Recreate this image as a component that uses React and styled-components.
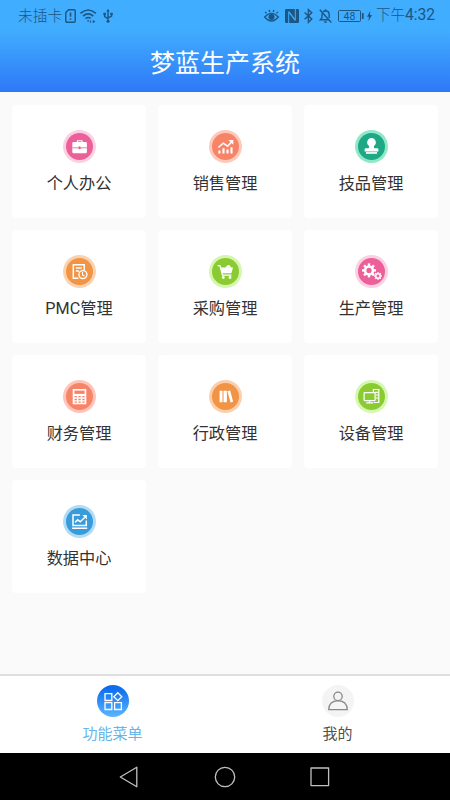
import React from 'react';
import styled, { createGlobalStyle } from 'styled-components';

const Global = createGlobalStyle`
  * { box-sizing: border-box; }
  body { margin: 0; background: #fafafa; font-family: Roboto, "Noto Sans CJK SC", sans-serif; font-weight: 400; }
`;
const Screen = styled.div`
  width: 450px; height: 800px; display: flex; flex-direction: column; overflow: hidden; background: #fafafa;
`;
const StatusBar = styled.div`
  height: 30px; flex: none; display: flex; align-items: center; background: #41adff; color: #1c5683;
  padding: 1px 15px 0 18px; font-size: 14.7px; line-height: 22px; white-space: nowrap;
`;
const Carrier = styled.span`
  width: 47px; font-weight: 300;
`;
const Clock = styled.span`
  display: flex; align-items: baseline; margin-left: 4px; font-size: 15.6px; font-weight: 400;
`;
const Meridiem = styled.span`
  font-size: 14.5px; font-weight: 300;
`;
const StatusIcon = styled.svg`
  display: block; flex: none; height: 16px; width: ${p => p.$w}px; margin-left: ${p => p.$gap || 0}px;
  fill: none; stroke: currentColor; stroke-width: 1.4; overflow: visible;
`;
const Spacer = styled.div`flex: 1;`;
const Header = styled.header`
  height: 62px; flex: none; display: flex; align-items: center; justify-content: center;
  background: linear-gradient(#41adff, #2e78f6); color: #fff; font-size: 25px; line-height: 36px;
  padding-top: 5px;
`;
const Content = styled.main`
  flex: 1; min-height: 0; padding: 13px 12px 0;
`;
const Grid = styled.div`
  display: grid; grid-template-columns: repeat(3, 134px); grid-auto-rows: 112.5px; gap: 12.5px 12px;
`;
const Card = styled.div`
  display: flex; flex-direction: column; align-items: center; background: #fff; border-radius: 4px; padding-top: 24.5px;
`;
const Badge = styled.div`
  width: 33px; height: 33px; border-radius: 50%; padding: 3px; background: ${p => p.$ring};
`;
const Disc = styled.div`
  width: 27px; height: 27px; border-radius: 50%; background: ${p => p.$fill};
  svg { display: block; width: 27px; height: 27px; }
`;
const Label = styled.span`
  margin-top: 9.5px; font-size: 16.2px; line-height: 24px; color: #333; white-space: nowrap;
`;
const TabBar = styled.nav`
  height: 79px; flex: none; display: flex; background: #fff; border-top: 2px solid #dedede;
`;
const Tab = styled.div`
  flex: 1; display: flex; flex-direction: column; align-items: center; padding-top: 9px;
  color: ${p => (p.$active ? '#68b5e9' : '#505050')}; font-size: 15px; line-height: 22px;
`;
const TabIcon = styled.div`
  width: 32px; height: 32px; border-radius: 50%; margin-bottom: 6px;
  background: ${p => (p.$active ? 'linear-gradient(#0d6cee 10%, #5bb6ff)' : '#f4f4f4')};
  svg { display: block; width: 32px; height: 32px; fill: none; stroke: ${p => (p.$active ? '#fff' : '#888')}; stroke-width: 1.3; }
`;
const NavBar = styled.div`
  height: 47px; flex: none; display: flex; align-items: center; justify-content: space-between;
  padding: 0 119px 0 118px; background: #000;
  svg { display: block; width: 22px; height: 22px; fill: none; stroke: #c0c0c0; stroke-width: 1.3; stroke-linejoin: round; }
`;

const Gear = ({ cx, cy, r, tooth }) => (
  <g transform={`translate(${cx} ${cy})`}>
    <circle r={r} fill="none" stroke="#fff" strokeWidth={r * 0.65} />
    {[0, 45, 90, 135, 180, 225, 270, 315].map(a => (
      <rect key={a} x={-tooth / 2} y={-r * 1.8} width={tooth} height={r * 0.7} fill="#fff" transform={`rotate(${a})`} />
    ))}
  </g>
);

const glyphs = {
  briefcase: c => (
    <>
      <path d="M11.4 9.6V7.7h4.7v1.9" fill="none" stroke="#fff" strokeWidth="1.1" />
      <rect x="6.3" y="9" width="14.6" height="11.3" rx="1.2" fill="#fff" />
      <path d="M6.3 14.8h14.6" stroke={c} strokeWidth=".8" />
      <ellipse cx="13.6" cy="14.8" rx="1.2" ry="1.5" fill={c} />
    </>
  ),
  sales: () => (
    <>
      <path d="M7.4 20.5v-2.9M11.5 20.5v-5.3M15.5 20.5v-3.9M19.5 20.5v-6.2" stroke="#fff" strokeWidth="2.1" />
      <path d="M6.3 14.5l5-4.3 4.3 3 4-4.2" fill="none" stroke="#fff" strokeWidth="1.6" />
      <path d="M16.4 7.1h4.9v4.6z" fill="#fff" />
    </>
  ),
  stamp: () => (
    <>
      <path d="M13.5 5a4.4 4.4 0 0 0-2.7 7.8c.4.6.4 1.6-.2 2.5H7.8q-1.2 0-1.2 1v2.1h13.8v-2.1q0-1-1.2-1h-2.8c-.6-.9-.6-1.9-.2-2.5A4.4 4.4 0 0 0 13.5 5z" fill="#fff" />
      <path d="M8 18.9h11v2H8z" fill="#dff7ed" />
    </>
  ),
  plan: c => (
    <>
      <path d="M12.4 20.2H7.3V6.7h10.9v5.4M9.8 10h6M9.8 13h3.2" fill="none" stroke="#fff" strokeWidth="1.5" />
      <circle cx="16.9" cy="16.6" r="4" fill={c} stroke="#fff" strokeWidth="1.4" />
      <path d="M16.5 14v3l2 1" fill="none" stroke="#fff" strokeWidth="1.1" />
    </>
  ),
  cart: () => (
    <>
      <path d="M5.6 7.6h2.3l2.6 9.6h9" fill="none" stroke="#fff" strokeWidth="1.3" />
      <path d="M8.5 9.6H21l-1.6 5.6H10z" fill="#fff" />
      <path d="M13.6 9.7q.4-2.6 3.2-2.7 1.7 0 2.2 2.7z" fill="#fff" />
      <circle cx="11.3" cy="19.5" r="1.4" fill="#fff" /><circle cx="18" cy="19.5" r="1.4" fill="#fff" />
    </>
  ),
  gears: () => (
    <>
      <Gear cx={11} cy={12.4} r={3.9} tooth={2.4} />
      <Gear cx={20} cy={18} r={2.2} tooth={1.3} />
    </>
  ),
  calculator: c => (
    <>
      <rect x="6.7" y="5.9" width="13.6" height="15.4" rx=".6" fill="#fff" />
      <path d="M8.4 7.6h10.2v3.3H8.4z" fill={c} />
      <path d="M8.6 13.7h2.3M12.4 13.7h2.3M16.3 13.7h2.3M8.6 16.5h2.3M12.4 16.5h2.3M16.3 16.5h2.3M8.6 19.2h2.3M12.4 19.2h2.3M16.3 19.2h2.3" stroke={c} strokeWidth="1.3" />
    </>
  ),
  books: () => (
    <>
      <path d="M7.6 7.8h2.9v11.5H7.6zM11.5 7.8h3.4v11.5h-3.4z" fill="#fff" />
      <path d="M15.4 8.2l2.8-.6 2.9 11.2-2.5.6z" fill="#fff" />
    </>
  ),
  devices: c => (
    <g fill="none" stroke="#fff" strokeWidth="1.2">
      <path d="M15.4 9.4V6.5h5.4v13h-5" /><path d="M17 9.3h3.4M18 12h2.4M18 15h2.4" />
      <rect x="6.1" y="9.7" width="11" height="7.9" rx=".5" fill={c} />
      <path d="M11.6 17.6v2M8.2 19.8h7" />
    </g>
  ),
  data: () => (
    <g fill="none" stroke="#fff" strokeWidth="1.5">
      <path d="M13.9 7H7v10.5h13.3v-5M6 20.2h15.2" />
      <path d="M9.1 14.4l2.6-2.6 2.5 2 4.5-4.3" />
      <path d="M16.4 7.1h4.4v4.4z" fill="#fff" stroke="none" />
    </g>
  ),
};

const items = [
  ['个人办公', 'briefcase', '#ec5f98', '#fbd0e2'],
  ['销售管理', 'sales', '#f88468', '#fdc9bb'],
  ['技品管理', 'stamp', '#1fa885', '#91e8c7'],
  ['PMC管理', 'plan', '#f19445', '#fbd2b0'],
  ['采购管理', 'cart', '#8acb32', '#d6f5ae'],
  ['生产管理', 'gears', '#ec5f98', '#fbd0e2'],
  ['财务管理', 'calculator', '#f88468', '#fdc4b9'],
  ['行政管理', 'books', '#f19445', '#fbcfac'],
  ['设备管理', 'devices', '#8acb32', '#d6f7b0'],
  ['数据中心', 'data', '#389bda', '#b2dcf6'],
];

const MenuCard = ({ label, glyph, fill, ring }) => (
  <Card>
    <Badge $ring={ring}><Disc $fill={fill}><svg viewBox="0 0 27 27">{glyphs[glyph](fill)}</svg></Disc></Badge>
    <Label>{label}</Label>
  </Card>
);

export default function App() {
  return (
    <Screen>
      <Global />
      <StatusBar>
        <Carrier>未插卡</Carrier>
        <StatusIcon $w={11} viewBox="0 0 11 16">
          <path d="M3.6 1.8H9q1.2 0 1.2 1.2v10q0 1.2-1.2 1.2H2Q.8 14.2.8 13V4.6z" /><path d="M5.5 4.6v4.2M5.5 10.2v1.6" strokeWidth="1.6" />
        </StatusIcon>
        <StatusIcon $w={17} $gap={4} viewBox="0 0 17 16">
          <path d="M.5 5.3q7.6-6.6 15.4 0M3 8.1q5.2-4.4 10.3 0M5.5 10.6q2.7-2 5.2-.2" strokeWidth="1.6" />
          <path d="M7 12.2h2.2l-1.1 2zM11 12v3.2l-1.4-1.6zM12.7 12v3.2l2.7-1.6z" fill="currentColor" stroke="none" />
        </StatusIcon>
        <StatusIcon $w={10} $gap={6} viewBox="0 0 10 16">
          <path d="M5 2.8v10M1.6 6v2.7L5 10.6M8.6 5.8v2.3L5 9.8" /><path d="M3.4 3.5L5 .8l1.6 2.7zM.4 4.8h2.5v2.4H.4zM7.3 4.7h2.4V7H7.3z" fill="currentColor" stroke="none" />
          <circle cx="5" cy="13.3" r="1.5" fill="currentColor" stroke="none" />
        </StatusIcon>
        <Spacer />
        <StatusIcon $w={15} viewBox="0 0 15 16">
          <path d="M.7 9q6.8-7.2 13.6 0-6.8 8-13.6 0zM2.5 5.4L1.2 3.9M5.7 3.8l-.5-2M9.3 3.8l.5-2M12.5 5.4l1.3-1.5" /><circle cx="7.5" cy="9" r="2.3" fill="currentColor" />
        </StatusIcon>
        <StatusIcon $w={14} $gap={6} viewBox="0 0 14 16">
          <path d="M1 1h12q1 0 1 1v12q0 1-1 1H1q-1 0-1-1V2Q0 1 1 1z" fill="currentColor" stroke="none" />
          <path d="M3.7 15V4.2l6.6 8.6M10.3 1v10.8L3.7 3.2" stroke="#41adff" strokeWidth="1" />
        </StatusIcon>
        <StatusIcon $w={9} $gap={5} viewBox="0 0 9 16"><path d="M.6 4.5l7.2 6.6-3.4 3.3V1.5l3.4 3.2L.6 11.3" /></StatusIcon>
        <StatusIcon $w={13} $gap={6} viewBox="0 0 13 16">
          <path d="M.8 1.8l11.5 12.7M3 5.5v4.1l-1.7 2.2h8.6M4.1 3.8q1-1 2.4-1 3.7.2 3.7 4v3.3M6.5 1.2v1.5M5.2 14h2.5" />
        </StatusIcon>
        <StatusIcon $w={26} $gap={6} viewBox="0 0 26 16">
          <rect x=".5" y="2.5" width="22" height="11" rx="1" strokeWidth="1" /><path d="M24.8 5.1v5.8" strokeWidth="1.8" />
          <text x="11.5" y="11.8" textAnchor="middle" fontSize="10.5" fill="currentColor" stroke="none">48</text>
        </StatusIcon>
        <StatusIcon $w={5} $gap={3} viewBox="0 0 5 16"><path d="M3.3 2.7L0 8.7h2L1.4 13.3 5 6.9H2.9z" fill="currentColor" stroke="none" /></StatusIcon>
        <Clock><Meridiem>下午</Meridiem>4:32</Clock>
      </StatusBar>
      <Header>梦蓝生产系统</Header>
      <Content>
        <Grid>
          {items.map(([label, glyph, fill, ring]) => <MenuCard key={label} label={label} glyph={glyph} fill={fill} ring={ring} />)}
        </Grid>
      </Content>
      <TabBar>
        <Tab $active>
          <TabIcon $active>
            <svg viewBox="0 0 32 32"><path d="M8 8.7h6.8v6.8H8zM8 17.7h6.8v6.8H8zM17.6 17.7h6.8v6.8h-6.8zM20.8 7.7l4 4-4 4-4-4z" /></svg>
          </TabIcon>
          功能菜单
        </Tab>
        <Tab>
          <TabIcon>
            <svg viewBox="0 0 32 32"><circle cx="16" cy="11.4" r="4.2" /><path d="M6.7 24.7q.3-8.6 9.3-9 9 .4 9.3 9z" /></svg>
          </TabIcon>
          我的
        </Tab>
      </TabBar>
      <NavBar>
        <svg viewBox="0 0 22 22"><path d="M2.3 11L18.8 1.2v19.6z" /></svg>
        <svg viewBox="0 0 22 22"><circle cx="11" cy="11" r="9.7" /></svg>
        <svg viewBox="0 0 22 22"><rect x="2" y="2" width="17.6" height="17.6" /></svg>
      </NavBar>
    </Screen>
  );
}
